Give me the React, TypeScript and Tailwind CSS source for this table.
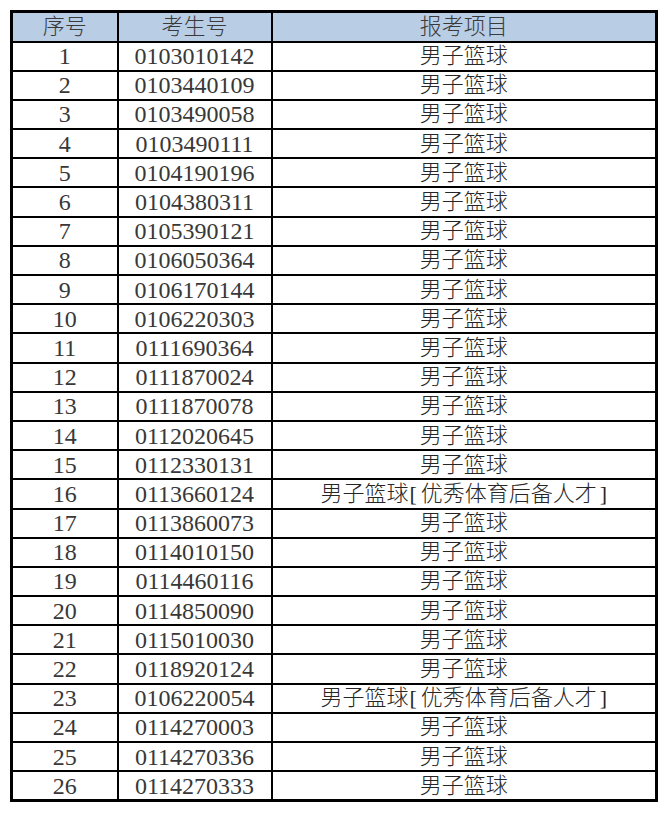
const rows: [string, boolean][] = [
  ["0103010142", false],
  ["0103440109", false],
  ["0103490058", false],
  ["0103490111", false],
  ["0104190196", false],
  ["0104380311", false],
  ["0105390121", false],
  ["0106050364", false],
  ["0106170144", false],
  ["0106220303", false],
  ["0111690364", false],
  ["0111870024", false],
  ["0111870078", false],
  ["0112020645", false],
  ["0112330131", false],
  ["0113660124", true],
  ["0113860073", false],
  ["0114010150", false],
  ["0114460116", false],
  ["0114850090", false],
  ["0115010030", false],
  ["0118920124", false],
  ["0106220054", true],
  ["0114270003", false],
  ["0114270336", false],
  ["0114270333", false],
];

function Item({ reserve }: { reserve: boolean }) {
  if (!reserve) return <>男子篮球</>;
  return (
    <>
      男子篮球<span className="ml-[1px] mr-[4px]">[</span>优秀体育后备人才
      <span className="ml-[3px]">]</span>
    </>
  );
}

export default function App() {
  return (
    <div
      className="min-h-[813px] w-[667px] bg-white pt-[10px] pl-[10px] text-[#262626]"
      style={{ fontFamily: '"Liberation Serif", "Noto Sans CJK SC", serif' }}
    >
      <table className="w-[645px] table-fixed border-collapse border-[3px] border-black leading-none">
        <colgroup>
          <col className="w-[106px]" />
          <col className="w-[154px]" />
          <col className="w-[385px]" />
        </colgroup>
        <thead>
          <tr className="h-[30px] bg-[#b9cde5] text-[22px] font-light text-[#3a3a3a]">
            <th className="border-2 border-black font-light">序号</th>
            <th className="border-2 border-black font-light">考生号</th>
            <th className="border-2 border-black font-light">报考项目</th>
          </tr>
        </thead>
        <tbody>
          {rows.map(([id, reserve], i) => (
            <tr key={id} className="h-[29.2px]">
              <td className="border-2 border-black text-center text-[24px] text-[#383838]">{i + 1}</td>
              <td className="border-2 border-black text-center text-[24px] text-[#383838]">{id}</td>
              <td className="border-2 border-black text-center text-[22px] font-light">
                <Item reserve={reserve} />
              </td>
            </tr>
          ))}
        </tbody>
      </table>
    </div>
  );
}
